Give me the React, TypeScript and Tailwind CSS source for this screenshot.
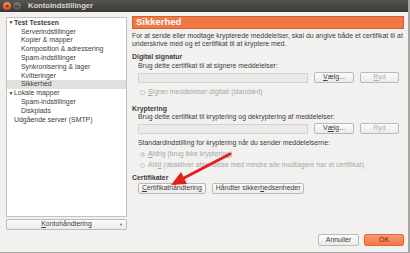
import React from "react";

const Btn = ({ children, className = "", disabled = false }: { children: React.ReactNode; className?: string; disabled?: boolean }) => (
  <div
    className={`flex items-center justify-center rounded-[2px] border border-[#bcbab6] bg-gradient-to-b from-[#fbfbfb] to-[#ecebea] h-[11px] ${disabled ? "text-[#aeaca8]" : "text-[#3c3c3c]"} ${className}`}
  >
    {children}
  </div>
);

const Row = ({ children, className = "" }: { children: React.ReactNode; className?: string }) => (
  <div className={`h-[8.8px] flex items-center whitespace-nowrap ${className}`}>{children}</div>
);

export default function App() {
  return (
    <div className="relative w-[410px] h-[253px] overflow-hidden bg-[#f2f1f0] font-['Liberation_Sans',sans-serif] text-[6.9px] text-[#3c3c3c] border-r-2 border-b border-[#a9a7a3] flex flex-col">
      {/* title bar */}
      <div className="h-[12px] shrink-0 bg-gradient-to-b from-[#55544f] to-[#3b3a36] flex items-center">
        <div className="ml-[3px] w-[8px] h-[8px] rounded-full bg-gradient-to-b from-[#f58a62] to-[#d94a1e] flex items-center justify-center text-[6px] leading-none text-[#3a1a0e] font-bold">×</div>
        <div className="ml-[2px] w-[8px] h-[8px] rounded-full bg-gradient-to-b from-[#77766f] to-[#56554f] flex items-center justify-center">
          <div className="w-[4px] h-[1px] bg-[#3a3935]" />
        </div>
        <div className="ml-[7px] text-[7.6px] font-bold text-[#dcd8cf]">Kontoindstillinger</div>
      </div>

      <div className="flex flex-1 min-h-0">
        {/* left column */}
        <div className="w-[132px] shrink-0 pl-[6px] pt-[5px] pr-[5px] flex flex-col">
          <div className="h-[200px] bg-white border border-[#c4c2be] pt-[0.6px]">
            <Row className="pl-[1px] font-bold"><span className="w-[6px] text-[5px] text-center">▼</span>Test Testesen</Row>
            <Row className="pl-[14px]">Serverindstillinger</Row>
            <Row className="pl-[14px]">Kopier &amp; mapper</Row>
            <Row className="pl-[14px]">Komposition &amp; adressering</Row>
            <Row className="pl-[14px]">Spam-indstillinger</Row>
            <Row className="pl-[14px]">Synkronisering &amp; lager</Row>
            <Row className="pl-[14px]">Kvitteringer</Row>
            <Row className="pl-[14px] bg-[#e1e0dd]">Sikkerhed</Row>
            <Row className="pl-[1px]"><span className="w-[6px] text-[5px] text-center">▼</span>Lokale mapper</Row>
            <Row className="pl-[14px]">Spam-indstillinger</Row>
            <Row className="pl-[14px]">Diskplads</Row>
            <Row className="pl-[7px]">Udgående server (SMTP)</Row>
          </div>
          <div className="mt-[2px] relative">
            <Btn className="w-full">
              <span><span className="underline">K</span>ontohåndtering</span>
            </Btn>
            <span className="absolute right-[4px] top-[3px] text-[4px] text-[#6b6965]">▼</span>
          </div>
        </div>

        {/* right column */}
        <div className="flex-1 pt-[4px] pr-[4px] flex flex-col">
          <div className="h-[13px] bg-[#f07746] border border-[#d65f2e] flex items-center pl-[3px] text-[9.5px] font-bold text-white">
            Sikkerhed
          </div>
          <div className="mt-[3px] leading-[8px] whitespace-nowrap">
            For at sende eller modtage krypterede meddelelser, skal du angive både et certifikat til at
            <br />
            underskrive med og et certifikat til at kryptere med.
          </div>

          <div className="mt-[5px] h-[8px] flex items-center font-bold">Digital signatur</div>
          <div className="pl-[6px] flex flex-col">
            <div className="mt-[1px] h-[8px] flex items-center">Brug dette certifikat til at signere meddelelser:</div>
            <div className="mt-[2px] flex items-center gap-[6px]">
              <div className="w-[170px] h-[10px] bg-[#ebeae8] border border-[#d3d1ce] rounded-[1px]" />
              <Btn className="w-[40px]"><span><span className="underline">V</span>ælg...</span></Btn>
              <Btn className="w-[39px]" disabled><span><span className="underline">R</span>yd</span></Btn>
            </div>
            <div className="mt-[5px] h-[8px] flex items-center text-[#a9a7a3] pl-[2px] whitespace-nowrap">
              <div className="w-[5px] h-[5px] border border-[#cfcdca] bg-[#eeedeb] rounded-[1px] mr-[3px]" />
              <span><span className="underline">S</span>igner meddelelser digitalt (standard)</span>
            </div>
          </div>

          <div className="mt-[9px] h-[8px] flex items-center font-bold">Kryptering</div>
          <div className="pl-[6px] flex flex-col">
            <div className="h-[8px] flex items-center whitespace-nowrap">Brug dette certifikat til kryptering og dekryptering af meddelelser:</div>
            <div className="mt-[2px] flex items-center gap-[6px]">
              <div className="w-[170px] h-[10px] bg-[#ebeae8] border border-[#d3d1ce] rounded-[1px]" />
              <Btn className="w-[40px]"><span>V<span className="underline">æ</span>lg...</span></Btn>
              <Btn className="w-[39px]" disabled><span>Ryd</span></Btn>
            </div>
            <div className="mt-[5px] h-[8px] flex items-center whitespace-nowrap">Standardindstilling for kryptering når du sender meddelelserne:</div>
            <div className="mt-[3px] h-[8px] flex items-center text-[#a9a7a3] pl-[2px] whitespace-nowrap">
              <div className="w-[5px] h-[5px] rounded-full border border-[#cfcdca] bg-[#eeedeb] mr-[3px] flex items-center justify-center">
                <div className="w-[2px] h-[2px] rounded-full bg-[#bdbbb7]" />
              </div>
              <span><span className="underline">A</span>ldrig (brug ikke kryptering)</span>
            </div>
            <div className="mt-[3px] h-[8px] flex items-center text-[#a9a7a3] pl-[2px] whitespace-nowrap">
              <div className="w-[5px] h-[5px] rounded-full border border-[#cfcdca] bg-[#eeedeb] mr-[3px]" />
              <span>Alti<span className="underline">d</span> (deaktiver afsendelse med mindre alle modtagere har et certifikat)</span>
            </div>
          </div>

          <div className="mt-[5px] h-[8px] flex items-center font-bold">Certifikater</div>
          <div className="pl-[6px] mt-[1px] flex items-center gap-[6px] whitespace-nowrap">
            <Btn className="px-[3px]"><span><span className="underline">C</span>ertifikathåndtering</span></Btn>
            <Btn className="px-[3px]"><span>Håndter sikker<span className="underline">h</span>edsenheder</span></Btn>
          </div>

          <div className="mt-auto mb-[6px] flex justify-end gap-[5px]">
            <Btn className="w-[41px] h-[12px]">Annuller</Btn>
            <div className="w-[40px] h-[12px] rounded-[2px] border border-[#e0683a] bg-gradient-to-b from-[#f8976f] to-[#f0784a] flex items-center justify-center text-[#5a2a14]">OK</div>
          </div>
        </div>
      </div>

      {/* red arrow annotation */}
      <svg className="absolute left-0 top-0 pointer-events-none" width="410" height="253">
        <line x1="230" y1="154" x2="182" y2="179" stroke="#e3211b" strokeWidth="3" strokeLinecap="round" />
        <polygon points="171,185 181,172 187,184" fill="#e3211b" />
      </svg>
    </div>
  );
}
